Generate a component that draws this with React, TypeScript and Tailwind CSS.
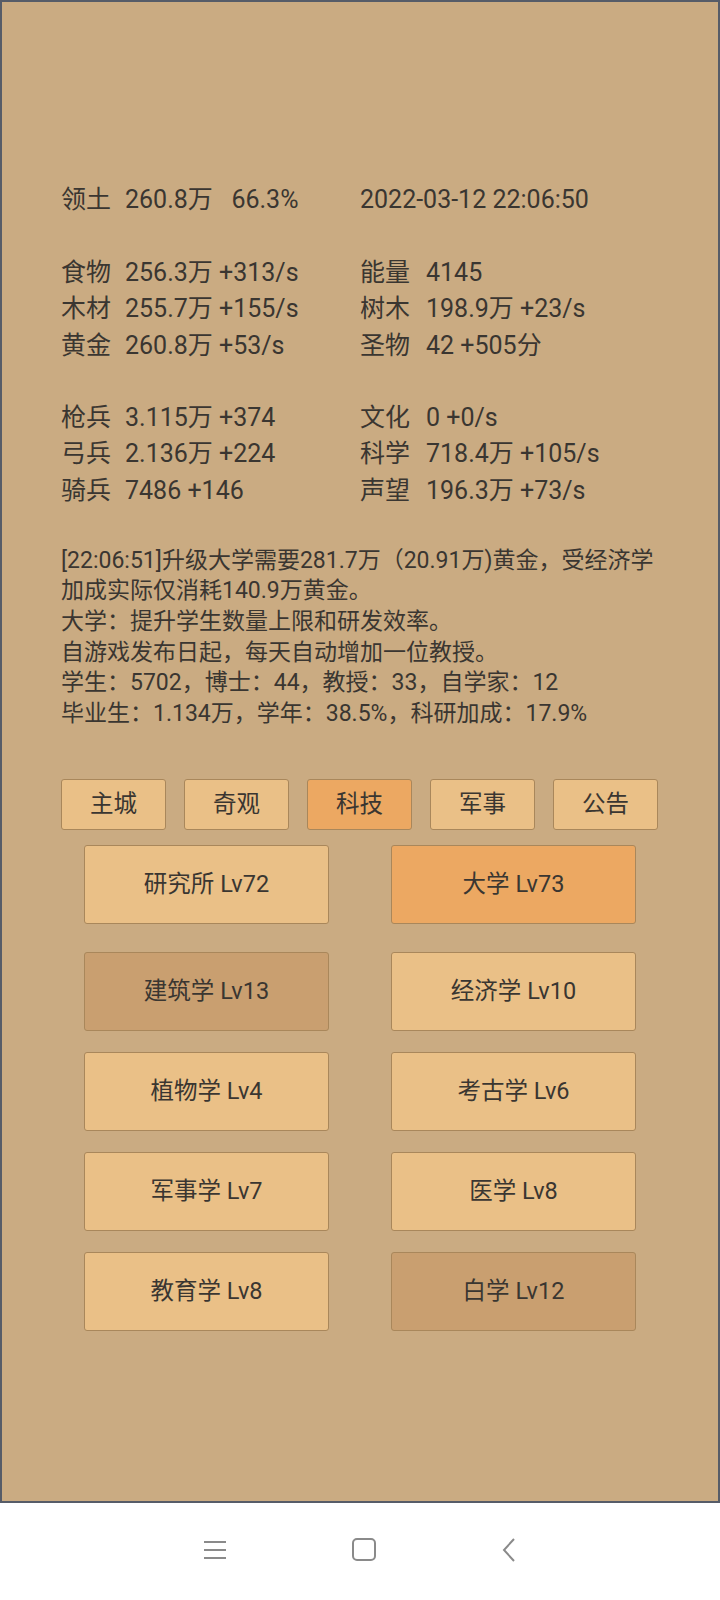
const FONT = { fontFamily: 'Roboto, "Noto Sans CJK SC", sans-serif' };

type Stat = [string, string] | null;

const leftStats: Stat[] = [
  ['领土', '260.8万   66.3%'],
  null,
  ['食物', '256.3万 +313/s'],
  ['木材', '255.7万 +155/s'],
  ['黄金', '260.8万 +53/s'],
  null,
  ['枪兵', '3.115万 +374'],
  ['弓兵', '2.136万 +224'],
  ['骑兵', '7486 +146'],
];

const rightStats: Stat[] = [
  ['', '2022-03-12 22:06:50'],
  null,
  ['能量', '4145'],
  ['树木', '198.9万 +23/s'],
  ['圣物', '42 +505分'],
  null,
  ['文化', '0 +0/s'],
  ['科学', '718.4万 +105/s'],
  ['声望', '196.3万 +73/s'],
];

const logLines = [
  '[22:06:51]升级大学需要281.7万（20.91万)黄金，受经济学',
  '加成实际仅消耗140.9万黄金。',
  '大学：提升学生数量上限和研发效率。',
  '自游戏发布日起，每天自动增加一位教授。',
  '学生：5702，博士：44，教授：33，自学家：12',
  '毕业生：1.134万，学年：38.5%，科研加成：17.9%',
];

const tabs = ['主城', '奇观', '科技', '军事', '公告'];

const buildings: { name: string; tone: 'light' | 'active' | 'dark' }[] = [
  { name: '研究所 Lv72', tone: 'light' },
  { name: '大学 Lv73', tone: 'active' },
  { name: '建筑学 Lv13', tone: 'dark' },
  { name: '经济学 Lv10', tone: 'light' },
  { name: '植物学 Lv4', tone: 'light' },
  { name: '考古学 Lv6', tone: 'light' },
  { name: '军事学 Lv7', tone: 'light' },
  { name: '医学 Lv8', tone: 'light' },
  { name: '教育学 Lv8', tone: 'light' },
  { name: '白学 Lv12', tone: 'dark' },
];

const toneClass = {
  light: 'bg-[#eac087]',
  active: 'bg-[#eca862]',
  dark: 'bg-[#c99f70]',
};

function StatColumn({ rows, wide }: { rows: Stat[]; wide?: boolean }) {
  return (
    <div className="flex flex-col">
      {rows.map((row, i) =>
        row ? (
          <div key={i} className="flex h-[36.3px] items-center whitespace-pre">
            {row[0] && <span className={wide ? 'w-[66px]' : 'w-[64px]'}>{row[0]}</span>}
            <span>{row[1]}</span>
          </div>
        ) : (
          <div key={i} className="h-[36.3px]" />
        )
      )}
    </div>
  );
}

export default function App() {
  return (
    <div className="w-[720px] h-[1600px] bg-white flex flex-col text-[#3a3631]" style={FONT}>
      <div className="h-[1503px] bg-[#caab82] border-2 border-[#565c68] pt-[180px] pl-[59px]">
        <div className="flex text-[25px]">
          <div className="w-[299px]">
            <StatColumn rows={leftStats} />
          </div>
          <StatColumn rows={rightStats} wide />
        </div>

        <div className="mt-[37px] text-[23px] leading-[30.7px]">
          {logLines.map((l) => (
            <div key={l} className="whitespace-nowrap">{l}</div>
          ))}
        </div>

        <div className="mt-[49px] flex gap-[18px]">
          {tabs.map((t) => (
            <div
              key={t}
              className={`w-[105px] h-[51px] flex items-center justify-center rounded-[3px] border border-[#a9875b] text-[23.5px] ${
                t === '科技' ? 'bg-[#eca862]' : 'bg-[#eac087]'
              }`}
            >
              {t}
            </div>
          ))}
        </div>

        <div className="mt-[15px] ml-[23px] grid grid-cols-[245px_245px] gap-x-[62px] gap-y-[21px]">
          {buildings.map((b, i) => (
            <div
              key={b.name}
              className={`h-[79px] flex items-center justify-center rounded-[3px] border-[1.5px] border-[#a9875b] text-[23.5px] ${toneClass[b.tone]} ${
                i < 2 ? 'mb-[7px]' : ''
              }`}
            >
              {b.name}
            </div>
          ))}
        </div>
      </div>

      <div className="flex-1 flex items-center justify-center gap-[126px] pb-[4px]">
        <div className="w-[22px] flex flex-col gap-[6px]">
          <div className="h-[2px] bg-[#8a8a8a]" />
          <div className="h-[2px] bg-[#8a8a8a]" />
          <div className="h-[2px] bg-[#8a8a8a]" />
        </div>
        <div className="w-[24px] h-[23px] rounded-[5px] border-2 border-[#8a8a8a]" />
        <svg width="14" height="24" viewBox="0 0 14 24" fill="none">
          <path d="M12 1 L2 12 L12 23" stroke="#8a8a8a" strokeWidth="2" />
        </svg>
      </div>
    </div>
  );
}
